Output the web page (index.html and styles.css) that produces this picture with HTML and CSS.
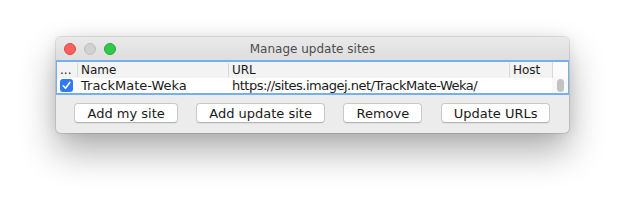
FILE: index.html
```html
<!DOCTYPE html>
<html lang="en">
<head>
    <meta charset="UTF-8">
    <title>Manage update sites</title>
    <link rel="stylesheet" href="styles.css">
</head>
<body>
    <div class="window">
        <div class="titlebar">
            <div class="lights">
                <span class="light red"></span>
                <span class="light gray"></span>
                <span class="light green"></span>
            </div>
            <div class="title">Manage update sites</div>
            <div></div>
        </div>

        <!-- update site table -->
        <div class="table">
            <div class="row head">
                <div class="cell c-check">...</div>
                <div class="cell c-name">Name</div>
                <div class="cell c-url">URL</div>
                <div class="cell c-host">Host</div>
                <div class="cell c-scroll"></div>
            </div>
            <div class="row data">
                <div class="cell c-check">
                    <span class="checkbox">
                        <svg width="13" height="13" viewBox="0 0 13 13">
                            <path d="M3.2 6.8 L5.5 9.2 L9.8 3.4" fill="none" stroke="#fff" stroke-width="1.6" stroke-linecap="round" stroke-linejoin="round"/>
                        </svg>
                    </span>
                </div>
                <div class="cell c-name">TrackMate-Weka</div>
                <div class="cell c-url">https://sites.imagej.net/TrackMate-Weka/</div>
                <div class="cell c-host"></div>
                <div class="cell c-scroll"><span class="thumb"></span></div>
            </div>
        </div>

        <div class="buttons">
            <button class="btn">Add my site</button>
            <button class="btn">Add update site</button>
            <button class="btn">Remove</button>
            <button class="btn">Update URLs</button>
        </div>
    </div>
</body>
</html>
```

FILE: styles.css
```css
html, body {
    height: 100%;
}

body {
    margin: 0;
    padding-top: 37px;
    box-sizing: border-box;
    background: #fff;
    font-family: "DejaVu Sans", sans-serif;
    color: #1a1a1a;
}

/* Window frame */
.window {
    margin-left: 56px;
    width: 513px;
    height: 96px;
    background: #ececec;
    border-radius: 5px;
    box-shadow: 0 0 0 1px rgba(0, 0, 0, 0.1), 0 18px 36px rgba(0, 0, 0, 0.32), 0 0 14px rgba(0, 0, 0, 0.08);
}

.titlebar {
    height: 23px;
    display: grid;
    grid-template-columns: 1fr auto 1fr;
    align-items: center;
    border-radius: 5px 5px 0 0;
    background: linear-gradient(#e9e9e9, #dedede);
}

.lights {
    display: flex;
    gap: 8px;
    padding-left: 8px;
}

.light {
    width: 12px;
    height: 12px;
    border-radius: 50%;
    box-sizing: border-box;
}

.red { background: #fc605b; border: 1px solid #de4a45; }
.gray { background: #d0d0d0; border: 1px solid #c0c0c0; }
.green { background: #34c84a; border: 1px solid #24a83a; }

.title {
    font-size: 12px;
    color: #4d4d4d;
}

/* Table */
.table {
    border: 2px solid #74b0f0;
    border-left-width: 1px;
    border-right-width: 1px;
    background: #fff;
}

.row {
    display: flex;
    align-items: center;
}

.row.head {
    background: #f3f3f3;
    font-size: 12px;
    height: 16px;
}

.row.data {
    font-size: 13px;
    height: 15px;
}

.cell {
    box-sizing: border-box;
    white-space: nowrap;
    overflow: hidden;
    padding-left: 3px;
}

.head .cell + .cell {
    border-left: 1px solid #d9d9d9;
}

.data .cell + .cell {
    border-left: 1px solid transparent;
}

.c-check { width: 20px; }
.c-name { width: 151px; }
.c-url { width: 281px; }
.c-host { width: 43px; }
.c-scroll { width: 16px; height: 100%; }

.data .c-url { letter-spacing: -0.5px; }

.head .c-scroll { background: #fbfbfb; }
.data .c-scroll { background: #f8f8f8; position: relative; }

.thumb {
    position: absolute;
    left: 4px;
    top: 1px;
    width: 7px;
    height: 13px;
    border-radius: 4px;
    background: #c2c2c2;
}

.checkbox {
    display: block;
    width: 13px;
    height: 13px;
    border-radius: 3px;
    background: #2f7bf5;
}

.checkbox svg {
    display: block;
}

/* Buttons */
.buttons {
    display: flex;
    justify-content: space-evenly;
    padding-top: 8px;
}

.btn {
    font-family: "DejaVu Sans", sans-serif;
    font-size: 13px;
    color: #1a1a1a;
    height: 20px;
    padding: 0 12px;
    background: #fff;
    border: 1px solid #c9c9c9;
    border-bottom-color: #b5b5b5;
    border-radius: 4px;
    box-shadow: 0 1px 1px rgba(0, 0, 0, 0.05);
}
```
